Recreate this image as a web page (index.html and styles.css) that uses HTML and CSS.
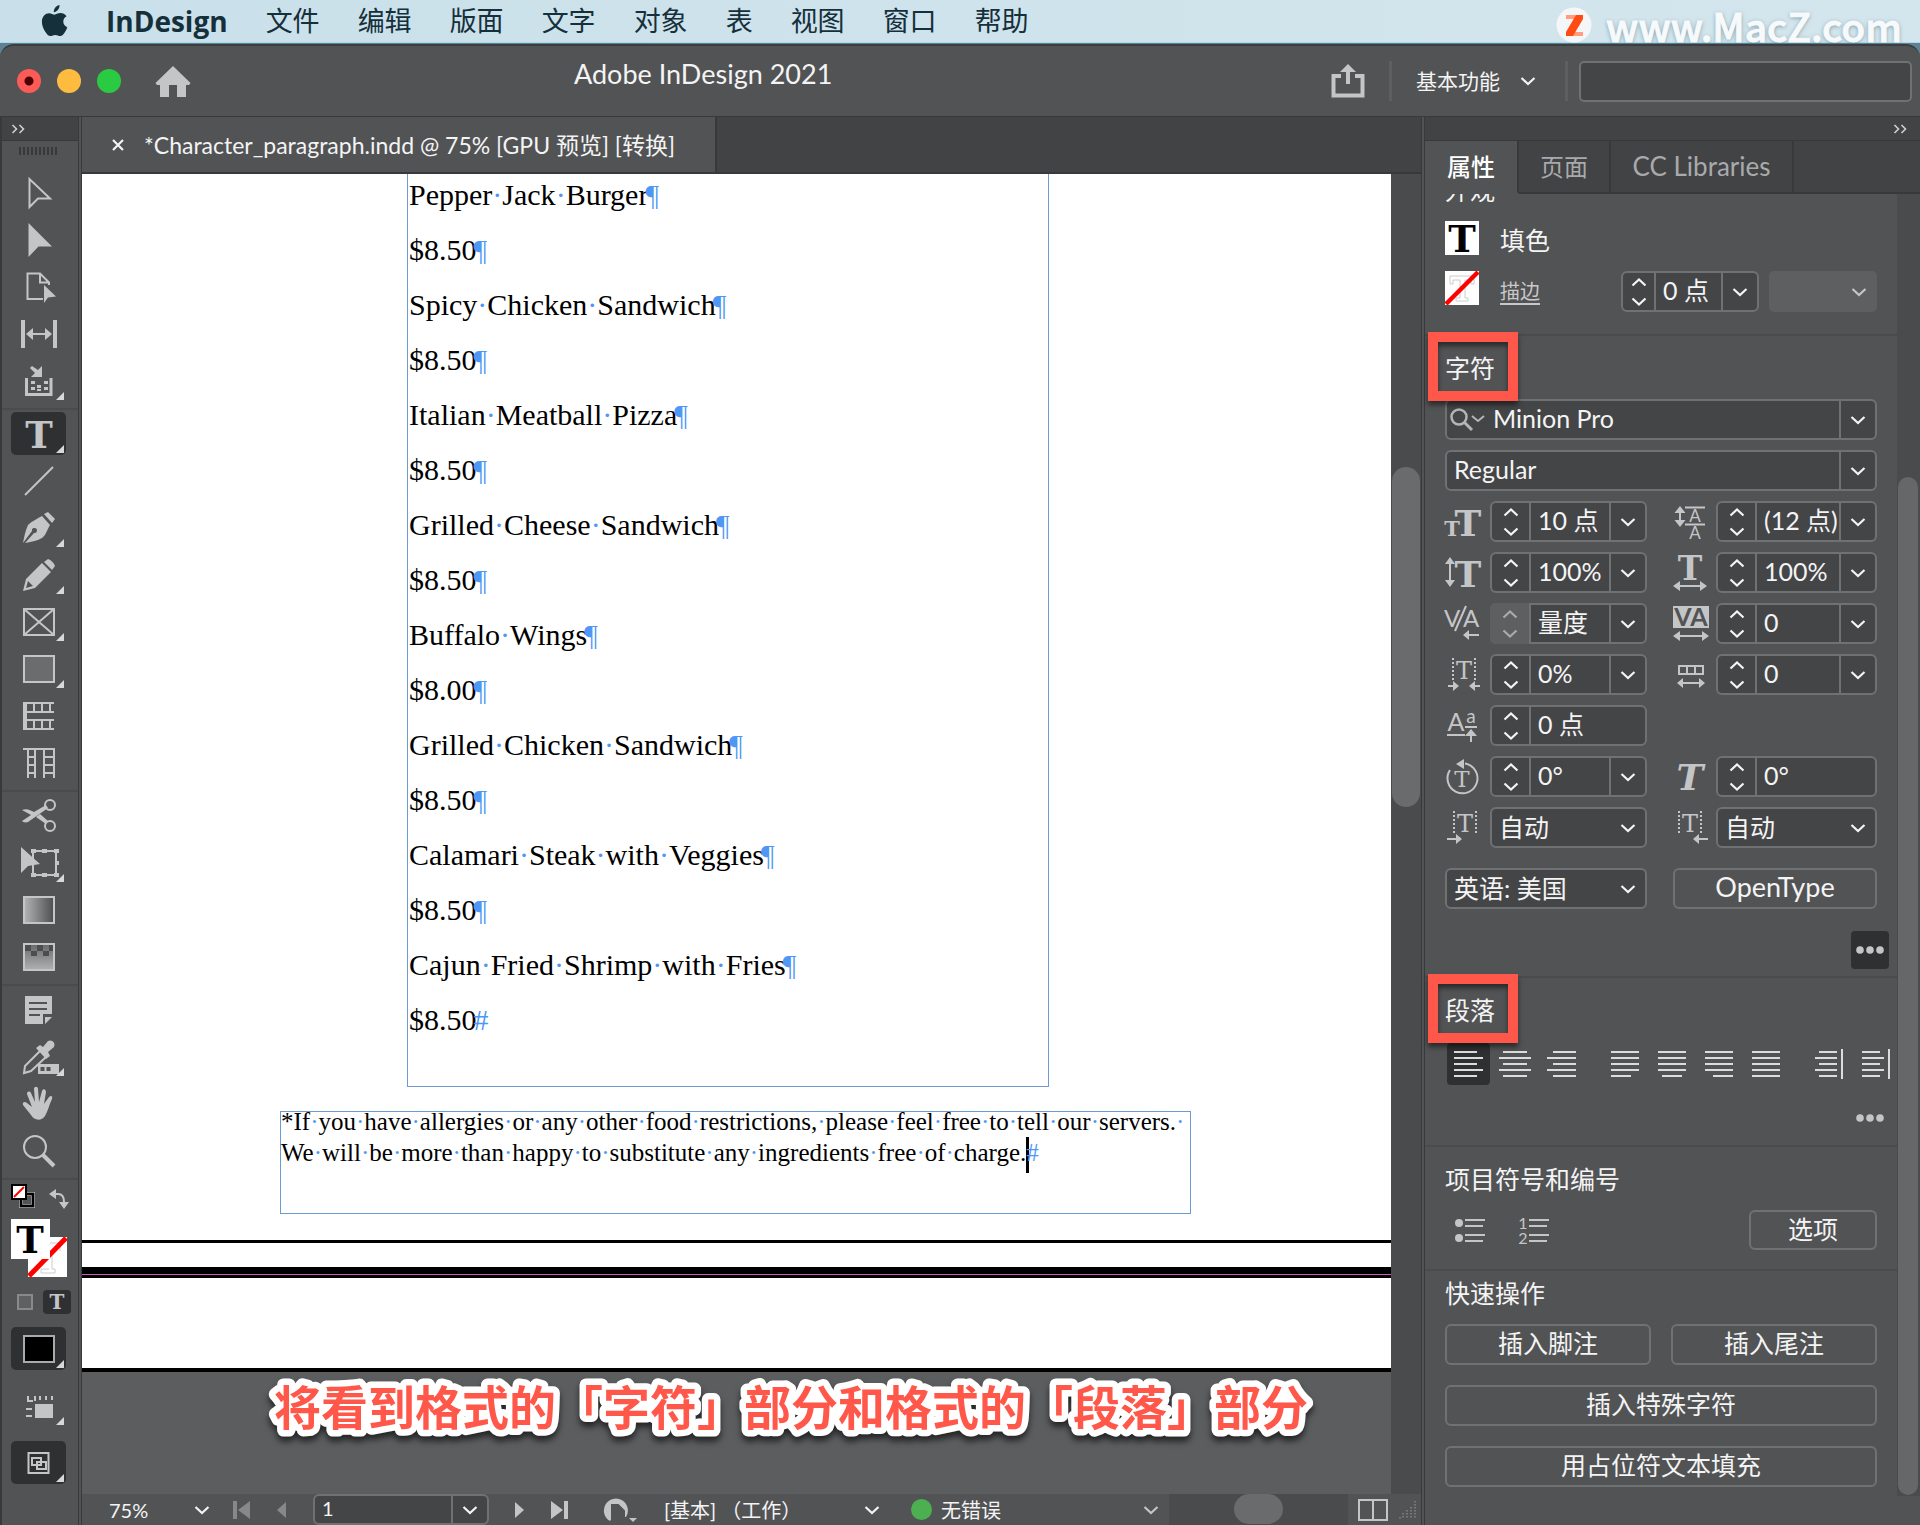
FILE: index.html
```html
<!DOCTYPE html>
<html lang="zh-CN">
<head>
<meta charset="utf-8">
<title>Adobe InDesign 2021</title>
<link rel="stylesheet" href="styles.css">
</head>
<body>
<svg class="defs" aria-hidden="true">
  <symbol id="chev" viewBox="0 0 16 10"><path d="M1.500 2l6.500 6 6.500-6" fill="none" stroke="currentColor" stroke-width="2.200"/></symbol>
  <symbol id="spin" viewBox="0 0 16 30"><path d="M1.500 8.500L8 2.500l6.500 6M1.500 21.500l6.500 6 6.500-6" fill="none" stroke="currentColor" stroke-width="2.200"/></symbol>
  <symbol id="more" viewBox="0 0 28 8"><circle cx="4" cy="4" r="3.800"/><circle cx="14" cy="4" r="3.800"/><circle cx="24" cy="4" r="3.800"/></symbol>
  <symbol id="dbl" viewBox="0 0 14 10"><path d="M1.500 1l4 4-4 4M8.500 1l4 4-4 4" fill="none" stroke="currentColor" stroke-width="1.600"/></symbol>
</svg>

<nav class="menubar">
  <svg class="apple" viewBox="0 0 26 32"><path d="M18 0c.2 2-.6 3.800-1.700 5.100C15.200 6.400 13.700 7.300 12.300 7.200c-.2-1.900.7-3.700 1.700-4.900C15.100 1 16.700.1 18 0zM25 11.200c-2 1.200-3.200 3-3.200 5.400 0 2.700 1.600 4.800 4 5.700-.6 1.900-1.500 3.600-2.600 5.200-1.200 1.700-2.500 3.600-4.500 3.600s-2.600-1.200-4.900-1.200-3 1.200-4.900 1.200c-2 0-3.400-1.800-4.600-3.500C1.900 24.200.4 20.500.4 16.800c0-5.600 3.600-8.600 7.100-8.600 2.200 0 4.100 1.500 5.500 1.500 1.300 0 3.400-1.600 6-1.600 2.300 0 4.500 1 6 3.100z"/></svg>
  <a class="app-name" href="#">InDesign</a>
  <a href="#">文件</a><a href="#">编辑</a><a href="#">版面</a><a href="#">文字</a><a href="#">对象</a><a href="#">表</a><a href="#">视图</a><a href="#">窗口</a><a href="#">帮助</a>
  <div class="watermark">
    <svg viewBox="0 0 36 36"><circle cx="18" cy="18" r="17.500" fill="#f4f6f7"/><path d="M10 8h17v4H10zM10 25h17v4H10z" fill="#ff9d7e"/><path d="M20 8h7v4L17 29h-7v-4z" fill="#ff4a12"/></svg>
    <span>www.MacZ.com</span>
  </div>
</nav>

<div class="window">
  <header class="titlebar">
    <div class="lights"><i class="red"></i><i class="yellow"></i><i class="green"></i></div>
    <button class="home" aria-label="主页"><svg viewBox="0 0 36 31"><path d="M18 0l17.500 17-1.500 2h-3v12h-9V19h-8v12H5V19H2l-1.500-2z"/></svg></button>
    <h1>Adobe InDesign 2021</h1>
    <div class="title-right">
      <button class="share" aria-label="共享"><svg viewBox="0 0 34 34"><path d="M10 12H2.500v19.500h29V12H24" fill="none" stroke="currentColor" stroke-width="4"/><path d="M15 20V8H9l8-8 8 8h-6v12z"/></svg></button>
      <span class="vsep"></span>
      <button class="workspace-menu">基本功能<svg class="chev"><use href="#chev"/></svg></button>
      <span class="vsep"></span>
      <input class="search" type="text" aria-label="搜索">
    </div>
  </header>

  <main class="work">
    <aside class="toolbar">
      <div class="strip"><svg class="dbl"><use href="#dbl"/></svg></div>
      <div class="grip"></div>
      <div class="tools">
        <button class="tool" aria-label="选择"><svg viewBox="0 0 40 40"><path d="M10.500 6v28l8.500-8.500h12z" class="ln"/></svg></button>
        <button class="tool" aria-label="直接选择"><svg viewBox="0 0 40 40"><path d="M9.500 3v34l10-10.500H33z"/></svg></button>
        <button class="tool" aria-label="页面"><svg viewBox="0 0 40 40"><path d="M24 32H8.500V6.500H21l9 9V18M21 6.500v9h9" class="ln"/><path d="M25 18v18l4-5.500 8-1z"/></svg></button>
        <button class="tool" aria-label="间隙"><svg viewBox="0 0 40 40"><path d="M2 6h4v28H2zM34 6h4v28h-4zM7 20l7-6v12zM33 20l-7-6v12z"/><path d="M10 20h20" class="ln"/></svg></button>
        <button class="tool more" aria-label="内容收集器"><svg viewBox="0 0 40 40"><path d="M7.500 17v16.500h24.500V17" class="ln mid"/><path d="M12 20h4v3h-4zM18 24h4v3h-4zM25 20h4v3h-4zM12 26h4v3h-4zM18 28h4v2h-4zM25 26h4v3h-4zM23 5v11H12l4-4-5-5 2-2 6 4z"/></svg></button>
      </div>
      <div class="tools">
        <button class="tool more on" aria-label="文字"><svg viewBox="0 0 40 40"><text class="t" x="20" y="34" font-size="37" text-anchor="middle">T</text></svg></button>
        <button class="tool" aria-label="直线"><svg viewBox="0 0 40 40"><path d="M6 34L34 6" class="ln"/></svg></button>
        <button class="tool more" aria-label="钢笔"><svg viewBox="0 0 40 40"><path d="M25 6l4-2 7 7-3 4z"/><path fill-rule="evenodd" d="M4 35c1-5 2-12 5-18 4-4 9-6 14-9l8 9c-3 5-4 10-8 13-5 3-12 4-17 5l9-10a2.500 2.500 0 1 0-2-2z"/></svg></button>
        <button class="tool more" aria-label="铅笔"><svg viewBox="0 0 40 40"><path d="M25 7l4-3c3 1 6 4 7 7l-3 4z"/><path fill-rule="evenodd" d="M4 36l3-12L23 8l9 9-16 16zM9 26l-2 7 7-2z"/></svg></button>
        <button class="tool more" aria-label="矩形框架"><svg viewBox="0 0 40 40"><path d="M5 7h30v26H5zM5 7l30 26M35 7L5 33" class="ln"/></svg></button>
        <button class="tool more" aria-label="矩形"><svg viewBox="0 0 40 40"><path d="M5 7h30v26H5z" fill="#6b6c6e" stroke="#c4c5c7" stroke-width="2"/></svg></button>
        <button class="tool" aria-label="水平网格"><svg viewBox="0 0 40 40"><path d="M35 7H5v26h30M5 16h30M5 24h30M7 7v26M15 7v9M23 7v9M31 7v9M15 24v9M23 24v9M31 24v9" class="ln"/></svg></button>
        <button class="tool" aria-label="垂直网格"><svg viewBox="0 0 40 40"><path d="M4 6h31v29M25 6v29M16 6v29M9 6v29M9 14h7M9 22h7M9 30h7M25 14h10M25 22h10M25 30h10" class="ln"/></svg></button>
      </div>
      <div class="tools">
        <button class="tool" aria-label="剪刀"><svg viewBox="0 0 40 40"><circle cx="31" cy="9" r="5" class="ln"/><circle cx="31" cy="30" r="5" class="ln"/><path d="M3 14c5-2 8 0 12 2l12-7 2 3L9 26c-3 1-5 0-6-1l9-6zM17 21l4-3 8 7-2 3z"/></svg></button>
        <button class="tool more" aria-label="自由变换"><svg viewBox="0 0 40 40"><path d="M14 8h23v24H14z" class="ln"/><path d="M12 6h5v4h-5zM23 6h5v4h-5zM35 6h5v4h-5zM36 18h4v4h-4zM12 30h5v4h-5zM23 30h5v4h-5zM35 30h5v4h-5zM2 4v26l7-7 12-2z"/></svg></button>
        <button class="tool" aria-label="渐变色板"><svg viewBox="0 0 40 40"><defs><linearGradient id="gr"><stop stop-color="#b4b5b7"/><stop offset="1" stop-color="#4c4d4f"/></linearGradient></defs><path d="M5 7h30v26H5z" fill="url(#gr)" stroke="#c4c5c7" stroke-width="2"/></svg></button>
        <button class="tool" aria-label="渐变羽化"><svg viewBox="0 0 40 40"><defs><linearGradient id="gf" x2="0" y2="1"><stop stop-color="#68696b"/><stop offset="1" stop-color="#b0b1b3"/></linearGradient></defs><path d="M5 7h30v26H5z" fill="url(#gf)" stroke="#c4c5c7" stroke-width="2"/><path d="M6 8h6v6H6zM18 8h6v6h-6zM30 8h4v6h-4zM12 14h6v5h-6zM24 14h6v5h-6z" fill="#4c4d4f"/></svg></button>
      </div>
      <div class="tools">
        <button class="tool" aria-label="附注"><svg viewBox="0 0 40 40"><path fill-rule="evenodd" d="M6 6h27v18h-9v10H6zM10 12v2h18v-2zM10 18v2h18v-2zM10 24v2h11v-2zM26 27h7l-7 7z"/></svg></button>
        <button class="tool more" aria-label="颜色主题"><svg viewBox="0 0 40 40"><path d="M21 14L6 29l-1 7 7-2 15-14" class="ln"/><path d="M17 11l4-3 3 2 5-6c4-2 8 2 6 6l-6 5 2 4-4 3zM19 27h21v10H19z"/><path d="M21.500 30h4v4h-4zM27.500 30h4v4h-4z" fill="#525355"/></svg></button>
        <button class="tool" aria-label="抓手"><svg viewBox="0 0 40 40"><path d="M12 31L4 21c-1-3 2-4 4-2l5 4-5-13c0-3 3-3 4-1l4 9-1-13c0-3 4-3 4 0l1 13 3-11c1-3 4-2 4 1l-2 12 5-7c2-2 4-1 3 2-3 6-4 12-7 17-3 5-11 5-14-1z"/></svg></button>
        <button class="tool" aria-label="缩放显示"><svg viewBox="0 0 40 40"><circle cx="16" cy="16" r="11" class="ln"/><path d="M24 24l11 11" class="ln thick"/></svg></button>
      </div>
      <div class="swatches">
        <div class="swatch-top">
          <button aria-label="默认填色和描边"><svg viewBox="0 0 24 24" width="24" height="24"><path d="M10 10h12v12H10z" fill="none" stroke="#b0b1b3" stroke-width="4"/><path d="M10 10h12v12H10z" fill="none" stroke="#000" stroke-width="2.500"/><path d="M1 1h14v14H1z" fill="#fff" stroke="#000" stroke-width="2"/><path d="M3 13L13 3" stroke="#f00" stroke-width="2"/></svg></button>
          <button aria-label="互换填色和描边"><svg viewBox="0 0 20 20" width="20" height="20"><path d="M7 5h2c4 0 6 3 6 8v1" class="ln"/><path d="M0 5l7-5v10zM10 13h10l-5 7z"/></svg></button>
        </div>
        <button class="fillstroke" aria-label="填色和描边"><svg viewBox="0 0 56 58" width="56" height="58"><path d="M17 18h39v40H17z" fill="#fff"/><path d="M38 24h11v8M38 50h-8v4h14v-4h-3V34" fill="none" stroke="#ccc"/><path d="M18 57L55 19" stroke="#f00" stroke-width="5"/><path d="M0 0h39v40H0z" fill="#fff"/><text class="t" x="19" y="34" font-size="37" text-anchor="middle" fill="#000">T</text></svg></button>
        <div class="targets"><button aria-label="格式针对容器"><i class="sq"></i></button><button class="on" aria-label="格式针对文本"><svg viewBox="0 0 20 20" width="20" height="20"><text class="t" x="10" y="17" font-size="20" text-anchor="middle">T</text></svg></button></div>
      </div>
      <div class="modes">
        <button class="tool more on" aria-label="应用颜色"><i class="black"></i></button>
        <button class="tool more" aria-label="视图选项"><svg viewBox="0 0 40 40"><path d="M16 18h18v14H16zM8 10h2v6H8zM8 14h6v2H8zM7 22h6v2H7zM7 29h6v2H7zM15 10h2v5h-2zM20 10h2v4h-2zM26 10h2v4h-2zM32 10h2v4h-2z"/></svg></button>
        <button class="tool more on" aria-label="屏幕模式"><svg viewBox="0 0 40 40"><path d="M9.500 10h20v20h-20zM13 15h9v7h-9zM18 19h9v7h-9z" class="ln"/></svg></button>
      </div>
    </aside>
    <div class="gutter"></div>

    <section class="editor">
      <div class="doc-tabs">
        <div class="doc-tab"><button aria-label="关闭"><svg viewBox="0 0 12 12" width="12" height="12"><path d="M1 1l10 10M11 1L1 11" stroke="currentColor" stroke-width="2.200"/></svg></button><span>*Character_paragraph.indd @ 75% [GPU 预览] [转换]</span></div>
      </div>
      <div class="view">
        <div class="canvas">
          <div class="sheet">
            <div class="frame menu">
              <p>Pepper<i>·</i>Jack<i>·</i>Burger<i>¶</i></p><p>$8.50<i>¶</i></p>
              <p>Spicy<i>·</i>Chicken<i>·</i>Sandwich<i>¶</i></p><p>$8.50<i>¶</i></p>
              <p>Italian<i>·</i>Meatball<i>·</i>Pizza<i>¶</i></p><p>$8.50<i>¶</i></p>
              <p>Grilled<i>·</i>Cheese<i>·</i>Sandwich<i>¶</i></p><p>$8.50<i>¶</i></p>
              <p>Buffalo<i>·</i>Wings<i>¶</i></p><p>$8.00<i>¶</i></p>
              <p>Grilled<i>·</i>Chicken<i>·</i>Sandwich<i>¶</i></p><p>$8.50<i>¶</i></p>
              <p>Calamari<i>·</i>Steak<i>·</i>with<i>·</i>Veggies<i>¶</i></p><p>$8.50<i>¶</i></p>
              <p>Cajun<i>·</i>Fried<i>·</i>Shrimp<i>·</i>with<i>·</i>Fries<i>¶</i></p><p>$8.50<i>#</i></p>
            </div>
            <div class="frame note">
              <p>*If<i>·</i>you<i>·</i>have<i>·</i>allergies<i>·</i>or<i>·</i>any<i>·</i>other<i>·</i>food<i>·</i>restrictions,<i>·</i>please<i>·</i>feel<i>·</i>free<i>·</i>to<i>·</i>tell<i>·</i>our<i>·</i>servers.<i>·</i><br>We<i>·</i>will<i>·</i>be<i>·</i>more<i>·</i>than<i>·</i>happy<i>·</i>to<i>·</i>substitute<i>·</i>any<i>·</i>ingredients<i>·</i>free<i>·</i>of<i>·</i>charge.<b class="caret"></b><i>#</i></p>
            </div>
          </div>
          <div class="sheet-gap"></div>
          <div class="sheet-edge"><div></div></div>
          <div class="sheet-next"></div>
          <svg class="caption"><text x="192" y="53">将看到格式的「字符」部分和格式的「段落」部分</text></svg>
        </div>
        <div class="vscroll"><div class="thumb"></div></div>
      </div>
      <footer class="status">
        <button class="zoom">75%<svg class="chev"><use href="#chev"/></svg></button>
        <div class="pager">
          <button class="dim" aria-label="首页"><svg viewBox="0 0 18 20" width="18" height="20"><path d="M0 1h4v18H0zM17 1v18L5 10z"/></svg></button>
          <button class="dim" aria-label="上一页"><svg viewBox="0 0 10 20" width="10" height="20"><path d="M9 2v16L0 10z"/></svg></button>
          <div class="field page-field"><input type="text" value="1" aria-label="页码"><button class="drop" aria-label="选择页面"><svg class="chev"><use href="#chev"/></svg></button></div>
          <button aria-label="下一页"><svg viewBox="0 0 10 20" width="10" height="20"><path d="M0 2v16l9-8z"/></svg></button>
          <button aria-label="末页"><svg viewBox="0 0 18 20" width="18" height="20"><path d="M13 1h4v18h-4zM0 1v18l12-9z"/></svg></button>
        </div>
        <button class="openmenu" aria-label="打开"><svg viewBox="0 0 36 26" width="36" height="26"><path d="M8 24A12 12 0 1 1 24 20h-3V12l-5-5h-6v14z"/><path d="M10 22V8h6l6 6v8" fill="none" stroke="#525355" stroke-width="2"/><path d="M15 8v7h7" fill="none" stroke="#525355" stroke-width="2"/><path d="M27 21h8l-4 4z"/></svg></button>
        <button class="profile">[基本] （工作）<svg class="chev"><use href="#chev"/></svg></button>
        <button class="preflight"><i class="dot"></i>无错误<svg class="chev"><use href="#chev"/></svg></button>
        <div class="hscroll"><div class="thumb"></div></div>
        <button class="split" aria-label="拆分窗口"><svg viewBox="0 0 30 22" width="30" height="22"><path d="M1 1h28v20H1zM15 1v20" class="ln"/></svg></button>
        <svg class="resize" viewBox="0 0 18 18" width="18" height="18"><path d="M16 0v18M12 6v12M8 9v9M4 12v6M1 16v2" stroke="#77787a" stroke-width="2" stroke-dasharray="1.500 1.500"/></svg>
      </footer>
    </section>
    <div class="gutter"></div>

    <aside class="panel">
      <div class="strip right"><svg class="dbl"><use href="#dbl"/></svg></div>
      <div class="panel-tabs" role="tablist"><button class="on" role="tab">属性</button><button role="tab">页面</button><button class="latin" role="tab">CC Libraries</button></div>
      <div class="panel-body">
        <div class="sections">
          <section class="look">
            <h2 class="cut">外观</h2>
            <div class="look-row"><svg width="34" height="34" viewBox="0 0 34 34"><path d="M0 0h34v34H0z" fill="#fff"/><text class="t" x="17" y="31" font-size="37" text-anchor="middle" fill="#000">T</text></svg><span>填色</span></div>
            <div class="look-row stroke"><svg width="34" height="34" viewBox="0 0 34 34"><path fill="#fff" d="M0 0h34v34H0z"/><path d="M5 5h24v8h-3V9h-6v18h3v3H11v-3h4V9H8v4H5z" fill="none" stroke="#ccc"/><path d="M1 33L33 1" stroke="#f00" stroke-width="4.500"/></svg><a href="#">描边</a>
              <div class="field weight"><button class="spin" aria-label="增减"><svg><use href="#spin"/></svg></button><input type="text" value="0 点" aria-label="描边粗细"><button class="drop" aria-label="粗细预设"><svg class="chev"><use href="#chev"/></svg></button></div>
              <button class="style-off" disabled aria-label="描边类型"><svg class="chev"><use href="#chev"/></svg></button>
            </div>
          </section>

          <section class="char">
            <h2>字符<span class="mark"></span></h2>
            <div class="stack">
              <div class="field"><svg class="find" viewBox="0 0 38 24" width="38" height="24"><circle cx="11" cy="9" r="7.500" fill="none" stroke="#b4b5b7" stroke-width="2.500"/><path d="M16 14l8 8" stroke="#b4b5b7" stroke-width="3"/><path d="M24 8l6 5 6-5" fill="none" stroke="#b4b5b7" stroke-width="2"/></svg><input type="text" value="Minion Pro" aria-label="字体"><button class="drop" aria-label="选择字体"><svg class="chev"><use href="#chev"/></svg></button></div>
              <div class="field"><input type="text" value="Regular" aria-label="字体样式"><button class="drop" aria-label="选择样式"><svg class="chev"><use href="#chev"/></svg></button></div>

              <div class="pair">
                <div class="item"><label for="size" aria-label="字体大小"><svg viewBox="0 0 36 36"><text class="t" x="23" y="32" font-size="36" text-anchor="middle">T</text><text class="t" x="7" y="32" font-size="21" text-anchor="middle">T</text></svg></label><div class="field"><button class="spin" aria-label="增减"><svg><use href="#spin"/></svg></button><input id="size" type="text" value="10 点"><button class="drop" aria-label="预设"><svg class="chev"><use href="#chev"/></svg></button></div></div>
                <div class="item"><label for="lead" aria-label="行距"><svg viewBox="0 0 36 36"><path d="M12 3.500h20M12 20.500h20M7 8v10" class="ln"/><path d="M1.500 9L7 2l5.500 7zM1.500 16L7 23l5.500-7z"/><text x="22" y="18" font-size="17" text-anchor="middle">A</text><text x="22" y="35" font-size="17" text-anchor="middle">A</text></svg></label><div class="field"><button class="spin" aria-label="增减"><svg><use href="#spin"/></svg></button><input id="lead" type="text" value="(12 点)"><button class="drop" aria-label="预设"><svg class="chev"><use href="#chev"/></svg></button></div></div>
              </div>
              <div class="pair">
                <div class="item"><label for="vs" aria-label="垂直缩放"><svg viewBox="0 0 36 36"><path d="M5 8v20" class="ln"/><path d="M0 9l5-7 5 7zM0 25l5 7 5-7z"/><text class="t" x="23" y="32" font-size="36" text-anchor="middle">T</text></svg></label><div class="field"><button class="spin" aria-label="增减"><svg><use href="#spin"/></svg></button><input id="vs" type="text" value="100%"><button class="drop" aria-label="预设"><svg class="chev"><use href="#chev"/></svg></button></div></div>
                <div class="item"><label for="hs" aria-label="水平缩放"><svg viewBox="0 0 36 36"><text class="t" x="17" y="25" font-size="33" text-anchor="middle">T</text><path d="M6 31h22" class="ln"/><path d="M0 31l7-5v10zM34 31l-7-5v10z"/></svg></label><div class="field"><button class="spin" aria-label="增减"><svg><use href="#spin"/></svg></button><input id="hs" type="text" value="100%"><button class="drop" aria-label="预设"><svg class="chev"><use href="#chev"/></svg></button></div></div>
              </div>
              <div class="pair">
                <div class="item"><label for="kern" aria-label="字偶间距"><svg viewBox="0 0 36 36"><text x="7" y="21" font-size="24" text-anchor="middle">V</text><text x="26" y="21" font-size="24" text-anchor="middle">A</text><path d="M21 0L10 25M22 29h12" class="ln"/><path d="M18 29l6-5v10z"/></svg></label><div class="field"><button class="spin off" disabled aria-label="增减"><svg><use href="#spin"/></svg></button><input id="kern" type="text" value="量度"><button class="drop" aria-label="预设"><svg class="chev"><use href="#chev"/></svg></button></div></div>
                <div class="item"><label for="track" aria-label="字符间距"><svg viewBox="0 0 36 36"><path d="M0 0h36v22H0z"/><text x="18" y="20" font-size="25" text-anchor="middle" class="cutout">VA</text><path d="M6 30h24" class="ln"/><path d="M0 30l7-5v10zM36 30l-7-5v10z"/></svg></label><div class="field"><button class="spin" aria-label="增减"><svg><use href="#spin"/></svg></button><input id="track" type="text" value="0"><button class="drop" aria-label="预设"><svg class="chev"><use href="#chev"/></svg></button></div></div>
              </div>
              <div class="pair">
                <div class="item"><label for="prop" aria-label="比例间距"><svg viewBox="0 0 36 36"><path d="M8 1v24M30 1v24" class="dots"/><text class="t r" x="19" y="22" font-size="24" text-anchor="middle">T</text><path d="M3 29h7M28 29h7" class="ln"/><path d="M14 29l-6-5v10zM24 29l6-5v10z"/></svg></label><div class="field"><button class="spin" aria-label="增减"><svg><use href="#spin"/></svg></button><input id="prop" type="text" value="0%"><button class="drop" aria-label="预设"><svg class="chev"><use href="#chev"/></svg></button></div></div>
                <div class="item"><label for="grid" aria-label="网格指定格数"><svg viewBox="0 0 36 36"><path d="M6 9h24v8H6zM14 9v8M22 9v8M8 26h20" class="ln"/><path d="M4 26l6-5v10zM32 26l-6-5v10z"/></svg></label><div class="field"><button class="spin" aria-label="增减"><svg><use href="#spin"/></svg></button><input id="grid" type="text" value="0"><button class="drop" aria-label="预设"><svg class="chev"><use href="#chev"/></svg></button></div></div>
              </div>
              <div class="pair">
                <div class="item"><label for="base" aria-label="基线偏移"><svg viewBox="0 0 36 36"><text x="11" y="23" font-size="25" text-anchor="middle">A</text><text x="26" y="15" font-size="19" text-anchor="middle">a</text><path d="M2 27h18M20 19h12M26 24v10" class="ln"/><path d="M20 28l6-7 6 7z"/></svg></label><div class="field"><button class="spin" aria-label="增减"><svg><use href="#spin"/></svg></button><input id="base" type="text" value="0 点"></div></div>
              </div>
              <div class="pair">
                <div class="item"><label for="rot" aria-label="字符旋转"><svg viewBox="0 0 36 36"><path d="M5 11A15 15 0 1 0 20 4.500" class="ln"/><path d="M11 5l8-5v10z"/><text class="t r" x="17" y="28" font-size="23" text-anchor="middle">T</text></svg></label><div class="field"><button class="spin" aria-label="增减"><svg><use href="#spin"/></svg></button><input id="rot" type="text" value="0°"><button class="drop" aria-label="预设"><svg class="chev"><use href="#chev"/></svg></button></div></div>
                <div class="item"><label for="skew" aria-label="倾斜"><svg viewBox="0 0 36 36"><text class="t" x="17" y="31" font-size="36" font-style="italic" text-anchor="middle">T</text></svg></label><div class="field"><button class="spin" aria-label="增减"><svg><use href="#spin"/></svg></button><input id="skew" type="text" value="0°"></div></div>
              </div>
              <div class="pair">
                <div class="item"><label for="before" aria-label="字符前挤压间距"><svg viewBox="0 0 36 36"><path d="M9 1v24M31 1v24" class="dots"/><text class="t r" x="20" y="22" font-size="24" text-anchor="middle">T</text><path d="M2 29h10" class="ln"/><path d="M17 29l-6-5v10z"/></svg></label><div class="select"><select id="before"><option>自动</option></select><svg class="chev"><use href="#chev"/></svg></div></div>
                <div class="item"><label for="after" aria-label="字符后挤压间距"><svg viewBox="0 0 36 36"><path d="M6 1v24M28 1v24" class="dots"/><text class="t r" x="17" y="22" font-size="24" text-anchor="middle">T</text><path d="M24 29h11" class="ln"/><path d="M20 29l6-5v10z"/></svg></label><div class="select"><select id="after"><option>自动</option></select><svg class="chev"><use href="#chev"/></svg></div></div>
              </div>
              <div class="pair lang">
                <div class="select"><select aria-label="语言"><option>英语: 美国</option></select><svg class="chev"><use href="#chev"/></svg></div>
                <button class="btn latin">OpenType</button>
              </div>
            </div>
            <button class="more-btn on" aria-label="更多选项"><svg><use href="#more"/></svg></button>
          </section>

          <section class="para">
            <h2>段落<span class="mark"></span></h2>
            <div class="aligns">
              <button class="on" aria-label="左对齐"><svg viewBox="0 0 32 30"><path d="M2 3h23M2 9h29M2 15h23M2 21h29M2 27h23"/></svg></button>
              <button aria-label="居中对齐"><svg viewBox="0 0 32 30"><path d="M4 3h24M0 9h32M4 15h24M0 21h32M4 27h24"/></svg></button>
              <button aria-label="右对齐"><svg viewBox="0 0 32 30"><path d="M7 3h23M1 9h29M7 15h23M1 21h29M7 27h23"/></svg></button>
              <button class="gap" aria-label="双齐末行齐左"><svg viewBox="0 0 32 30"><path d="M2 3h28M2 9h28M2 15h28M2 21h28M2 27h20"/></svg></button>
              <button aria-label="双齐末行居中"><svg viewBox="0 0 32 30"><path d="M2 3h28M2 9h28M2 15h28M2 21h28M6 27h20"/></svg></button>
              <button aria-label="双齐末行齐右"><svg viewBox="0 0 32 30"><path d="M2 3h28M2 9h28M2 15h28M2 21h28M10 27h20"/></svg></button>
              <button aria-label="全部强制双齐"><svg viewBox="0 0 32 30"><path d="M2 3h28M2 9h28M2 15h28M2 21h28M2 27h28"/></svg></button>
              <button class="gap" aria-label="朝向书脊对齐"><svg viewBox="0 0 32 30"><path d="M6 3h18M2 9h22M6 15h18M2 21h22M6 27h18M29 0v30"/></svg></button>
              <button aria-label="背向书脊对齐"><svg viewBox="0 0 32 30"><path d="M2 3h18M2 9h22M2 15h18M2 21h22M2 27h18M29 0v30"/></svg></button>
            </div>
            <button class="more-btn" aria-label="更多选项"><svg><use href="#more"/></svg></button>
          </section>

          <section class="lists">
            <h2>项目符号和编号</h2>
            <div class="list-row">
              <button class="li" aria-label="项目符号列表"><svg viewBox="0 0 30 28"><circle cx="4" cy="7" r="4"/><circle cx="4" cy="22" r="4"/><path d="M10 4h20M10 10h18M10 19h20M10 25h18" class="ln"/></svg></button>
              <button class="li" aria-label="编号列表"><svg viewBox="0 0 30 28"><text x="4" y="13" font-size="16" text-anchor="middle">1</text><text x="4" y="28" font-size="16" text-anchor="middle">2</text><path d="M10 4h20M10 10h18M10 19h20M10 25h18" class="ln"/></svg></button>
              <button class="btn options">选项</button>
            </div>
          </section>

          <section class="quick">
            <h2>快速操作</h2>
            <div class="quick-grid">
              <button class="btn">插入脚注</button><button class="btn">插入尾注</button>
              <button class="btn wide">插入特殊字符</button>
              <button class="btn wide">用占位符文本填充</button>
            </div>
          </section>
        </div>
        <div class="pscroll"><div class="thumb"></div></div>
      </div>
    </aside>
  </main>
</div>
</body>
</html>
```
FILE: styles.css
```css
:root {
  --panel: #525355;
  --dark: #424345;
  --field: #444547;
  --line: #38393b;
  --edge: #707173;
  --icon: #c4c5c7;
  --track: #4a4b4d;
}
* { box-sizing: border-box; }
body {
  margin: 0;
  min-height: 100vh;
  display: flex;
  flex-direction: column;
  background: #5f8196;
  color: #f4f4f4;
  font: 25px/28px Lato, "Noto Sans CJK SC", sans-serif;
}
h1, h2, p { margin: 0; font-weight: 400; }
button, input, select { font: inherit; color: inherit; margin: 0; }
button { background: none; border: 0; padding: 0; display: flex; align-items: center; justify-content: center; }
svg { display: block; fill: currentColor; flex: none; overflow: visible; }
svg text { font-family: Lato, sans-serif; }
svg text.t { font-family: "DejaVu Serif", serif; font-weight: 700; }
svg text.r { font-weight: 400; }
.ln { fill: none; stroke: currentColor; stroke-width: 2; }
.mid { stroke-width: 3; }
.thick { stroke-width: 4; }
.defs { position: absolute; width: 0; height: 0; }
.chev { width: 16px; height: 10px; }
.dbl { width: 14px; height: 10px; }

.menubar {
  height: 43px;
  padding: 0 18px 0 41px;
  display: flex;
  align-items: center;
  gap: 38px;
  background: linear-gradient(90deg, #c9e0ea, #d4e6ed);
  border-bottom: 1px solid #a9dbe8;
  font-size: 27px;
}
.menubar a { color: #16303b; text-decoration: none; }
.menubar .app-name { font: 700 28px/28px "Open Sans", sans-serif; }
.apple { width: 27px; height: 32px; fill: #16303b; }
.watermark {
  margin-left: auto;
  display: flex;
  align-items: center;
  gap: 14px;
  color: #f6fafb;
  font: 500 39px/44px "Noto Sans CJK SC", sans-serif;
  -webkit-text-stroke: 1px #f6fafb;
  text-shadow: 0 1px 4px rgba(60, 90, 110, .6);
  z-index: 1;
  padding-top: 8px;
}
.watermark svg { width: 36px; height: 36px; }

.window {
  flex: 1;
  display: flex;
  flex-direction: column;
  margin-top: 1px;
  border-top: 2px solid #3c3d3f;
  border-radius: 14px 14px 0 0;
  background: var(--panel);
  overflow: hidden;
}
.titlebar {
  height: 70px;
  flex: none;
  display: flex;
  align-items: center;
  padding: 0 8px 0 17px;
}
.lights { display: flex; gap: 16px; }
.lights i { width: 24px; height: 24px; border-radius: 50%; }
.red { background: radial-gradient(circle, #4c0002 4px, #fc5b57 5px); }
.yellow { background: #fdbc40; }
.green { background: #2acb42; }
.home { margin-left: 34px; color: var(--icon); }
.home svg { width: 36px; height: 31px; }
.titlebar h1 { margin-left: 383px; font-size: 27px; padding-bottom: 14px; }
.title-right { margin-left: auto; display: flex; align-items: center; }
.share { color: var(--icon); margin-right: 24px; }
.share svg { width: 34px; height: 34px; }
.vsep { width: 3px; height: 40px; background: #5e5f61; }
.workspace-menu { font-size: 21px; padding: 0 29px 0 24px; gap: 20px; }
.search { width: 333px; height: 41px; margin-left: 11px; background: var(--field); border: 2px solid var(--edge); border-radius: 5px; }

.work { flex: 1; display: flex; border-top: 1px solid var(--line); }
.gutter { width: 4px; border: 1px solid var(--line); border-width: 0 1px; }
.strip { height: 24px; background: var(--dark); border-bottom: 1px solid var(--line); display: flex; align-items: center; padding: 0 9px; color: #d0d0d0; }
.strip.right { justify-content: flex-end; padding-right: 13px; }

.toolbar { width: 78px; flex: none; border-left: 2px solid var(--line); color: var(--icon); }
.grip { width: 38px; height: 8px; margin: 6px auto 14px 17px; background: repeating-linear-gradient(90deg, #38393b 0 2px, transparent 2px 4px); }
.tools { border-bottom: 2px solid #4a4b4d; padding-bottom: 4px; }
.tool { position: relative; width: 55px; height: 47px; margin: 0 auto 0 9px; }
.tool svg { width: 40px; height: 40px; position: relative; }
.tool.on::before { content: ""; position: absolute; inset: 2px 0; background: #2f3032; border-radius: 5px; }
.tool.more::after { content: ""; position: absolute; right: 2px; bottom: 4px; border: 4px solid transparent; border-right-color: #d8d8d8; border-bottom-color: #d8d8d8; }
.swatches { padding: 3px 0 0 9px; }
.swatch-top { display: flex; gap: 14px; }
.swatch-top button:last-child { padding-top: 6px; }
.fillstroke { margin-top: 10px; }
.targets { display: flex; align-items: center; gap: 10px; padding: 13px 0 0 6px; }
.targets .on { width: 28px; height: 24px; background: #2f3032; border-radius: 4px; }
.sq { width: 16px; height: 16px; border: 2px solid #88898b; background: #5f6062; }
.modes { padding-top: 11px; display: grid; gap: 10px; }
.black { width: 32px; height: 28px; background: #000; border: 2px solid #a9aaac; position: relative; }

.editor { flex: 1; min-width: 0; display: flex; flex-direction: column; }
.doc-tabs { height: 57px; background: var(--dark); border-bottom: 2px solid var(--line); display: flex; }
.doc-tab { width: 635px; display: flex; align-items: center; gap: 20px; padding-left: 30px; background: var(--panel); border-right: 2px solid var(--line); font-size: 23px; white-space: nowrap; }
.view { flex: 1; display: flex; min-height: 0; }
.canvas { flex: 1; min-width: 0; overflow: hidden; background: #5c5d5f; }
.sheet { background: #fff; border-bottom: 3px solid #000; padding-bottom: 26px; overflow: hidden; color: #000; font-family: "Liberation Serif", serif; }
.frame { border: 1px solid #6c9bd2; white-space: nowrap; }
.frame i { font-style: normal; color: #4f97f5; }
.menu { width: 642px; height: 921px; margin: -8px 0 24px 325px; padding-left: 1px; font-size: 30px; line-height: 55px; }
.menu i:last-child { margin-left: -3px; }
.note { width: 911px; height: 103px; margin-left: 198px; font-size: 25px; line-height: 31px; }
.note p { margin-top: -6px; }
.caret { display: inline-block; width: 3px; height: 36px; margin: -10px -3px -10px 0; vertical-align: middle; background: #000; }
.sheet-gap { height: 24px; background: #fff; }
.sheet-edge { height: 11px; background: #000; padding-top: 7px; }
.sheet-edge div { height: 1px; background: #c860c8; }
.sheet-next { height: 94px; background: #fff; border-bottom: 4px solid #000; }
.caption {
  width: 100%;
  height: 72px;
  fill: #ff584a;
  stroke: #fff;
  stroke-width: 13px;
  stroke-linejoin: round;
  paint-order: stroke;
  filter: drop-shadow(0 5px 3px rgba(0, 0, 0, .6));
}
.caption text { font: 700 47px/70px "Noto Sans CJK SC", sans-serif; }
.vscroll { width: 30px; background: var(--track); padding: 293px 1px 0; }
.vscroll .thumb { height: 340px; border-radius: 14px; background: #6a6b6d; }

.status { height: 31px; flex: none; display: flex; align-items: center; background: var(--panel); font-size: 20px; white-space: nowrap; overflow: hidden; }
.zoom { padding-left: 27px; gap: 46px; width: 128px; justify-content: flex-start; }
.pager { display: flex; align-items: center; gap: 26px; color: var(--icon); padding-left: 23px; }
.dim { color: #87888a; }
.page-field { width: 176px; color: #f4f4f4; }
.page-field.field { height: 31px; }
.openmenu { color: var(--icon); margin: 0 26px 0 33px; }
.profile { width: 216px; justify-content: space-between; }
.preflight { flex: 1; gap: 9px; padding: 0 10px 0 31px; }
.preflight .chev { margin-left: auto; color: var(--icon); }
.dot { width: 21px; height: 21px; border-radius: 50%; background: #4caf50; }
.hscroll { width: 179px; height: 31px; background: var(--track); padding-left: 65px; }
.hscroll .thumb { width: 49px; height: 30px; border-radius: 15px; background: #6a6b6d; }
.split { margin: 0 11px 0 10px; color: var(--icon); }
.resize { margin-right: 4px; }

.panel { width: 495px; flex: none; display: flex; flex-direction: column; }
.panel-tabs { display: flex; height: 53px; background: var(--dark); }
.panel-tabs button { width: 92px; border: solid var(--line); border-width: 0 2px 2px 0; color: #a9aaac; font-size: 24px; }
.panel-tabs .on { width: 94px; background: var(--panel); color: #fff; border-bottom-color: var(--panel); font-weight: 500; }
.panel-tabs .latin { width: 183px; font-size: 26px; padding-bottom: 2px; }
.panel-tabs::after { content: ""; flex: 1; border-bottom: 2px solid var(--line); }
.panel-body { display: flex; }
.sections { flex: 1; min-width: 0; }
.pscroll { width: 23px; background: var(--track); padding: 283px 2px 1px 1px; display: flex; }
.pscroll .thumb { flex: 1; border-radius: 10px; background: #666769; }
.sections section { padding: 18px 20px 0; border-bottom: 2px solid #4a4b4d; }
.sections h2 { position: relative; line-height: 28px; margin-bottom: 17px; font-size: 25px; }
.mark { position: absolute; inset: -22px auto auto -17px; width: 90px; height: 69px; border: 10px solid #ff584a; box-shadow: 0 4px 5px rgba(0, 0, 0, .5), inset 0 4px 5px rgba(0, 0, 0, .5); z-index: 1; }

.sections .look { padding-top: 0; padding-bottom: 22px; }
.sections .cut { height: 8px; overflow: hidden; display: flex; align-items: flex-end; line-height: 23px; margin-bottom: 19px; }
.look-row { display: flex; gap: 21px; align-items: center; }
.look-row span { padding-top: 4px; }
.look-row.stroke { margin-top: 16px; align-items: flex-start; }
.look-row a { color: #c8c8c8; font-size: 20px; line-height: 34px; padding-top: 3px; text-underline-offset: 4px; }
.weight { width: 138px; margin-left: auto; }
.style-off { width: 108px; height: 41px; margin-left: -11px; background: #5e5f61; border-radius: 5px; color: var(--icon); justify-content: flex-end; padding-right: 10px; }

.field { flex: 1; display: flex; height: 41px; min-width: 0; background: var(--field); border: 2px solid var(--edge); border-radius: 6px; }
.field.weight, .field.page-field { flex: none; }
.field input { flex: 1; width: 0; min-width: 0; background: none; border: 0; padding: 0 0 3px 7px; outline: 0; }
.spin { width: 39px; border-right: 2px solid var(--edge); }
.weight .spin { width: 33px; }
.spin svg { width: 16px; height: 30px; }
.spin.off { margin: -2px 0 -2px -2px; width: 41px; background: #5e5f61; border-radius: 6px 0 0 6px; color: #a9aaac; }
.drop { width: 36px; border-left: 2px solid var(--edge); }
.find { align-self: center; margin-left: 1px; }
.select { flex: 1; position: relative; height: 41px; }
.select select { appearance: none; width: 100%; height: 41px; padding: 0 36px 2px 7px; background: var(--field); border: 2px solid var(--edge); border-radius: 6px; }
.select .chev { position: absolute; right: 11px; top: 16px; pointer-events: none; }
.stack { display: grid; gap: 10px; }
.pair { display: grid; grid-template-columns: 202px 1fr; gap: 26px; }
.pair.lang { margin-top: 10px; }
.item { display: flex; align-items: center; }
.item label { width: 45px; flex: none; color: var(--icon); }
.item + .item label { width: 43px; }
.item label svg { width: 36px; height: 36px; }
.cutout { fill: var(--panel); font-weight: 700; }
.dots { fill: none; stroke: currentColor; stroke-width: 2; stroke-dasharray: 2 2; }
.btn { height: 41px; padding-bottom: 3px; border: 2px solid var(--edge); border-radius: 6px; }
.btn.latin { font-size: 27px; }
.more-btn { width: 38px; height: 38px; margin: 22px -12px 0 auto; border-radius: 4px; color: var(--icon); }
.more-btn.on { background: #2f3032; }
.more-btn svg { width: 28px; height: 8px; }
.sections .char { padding-bottom: 7px; }
.sections .para { padding-bottom: 8px; }
.aligns { display: flex; gap: 4px; margin: 19px -20px 14px 2px; }
.aligns button { width: 43px; height: 42px; border-radius: 4px; color: #dcdcdc; }
.aligns .on { background: #2f3032; }
.aligns .gap { margin-left: 16px; }
.aligns svg { width: 32px; height: 30px; fill: none; stroke: currentColor; stroke-width: 2; }
.para .more-btn { margin-top: 0; }
.sections .lists { padding-bottom: 19px; }
.list-row { display: flex; align-items: center; padding-left: 10px; gap: 34px; }
.li { color: var(--icon); }
.li svg { width: 30px; height: 28px; }
.options { width: 128px; height: 40px; margin-left: auto; }
.sections .quick { padding-top: 8px; padding-bottom: 9px; border-bottom: 0; }
.quick-grid { display: grid; grid-template-columns: 1fr 1fr; gap: 20px; }
.wide { grid-column: 1 / -1; }
```
